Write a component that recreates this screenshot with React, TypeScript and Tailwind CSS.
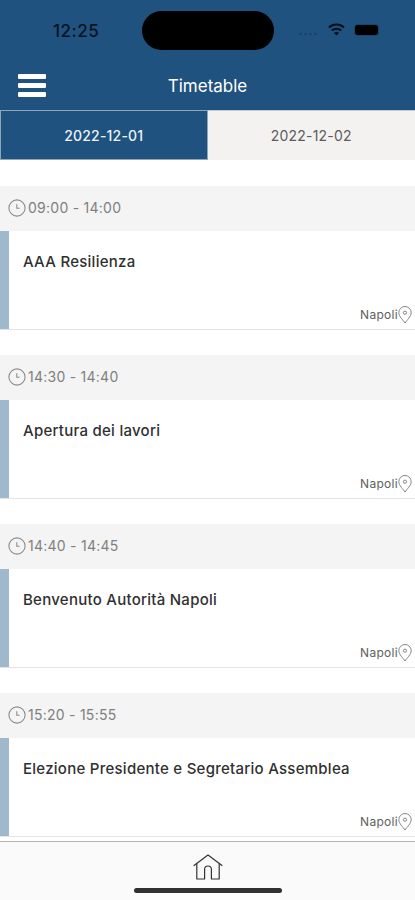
const sessions = [
  { time: "09:00 - 14:00", title: "AAA Resilienza", place: "Napoli" },
  { time: "14:30 - 14:40", title: "Apertura dei lavori", place: "Napoli" },
  { time: "14:40 - 14:45", title: "Benvenuto Autorità Napoli", place: "Napoli" },
  { time: "15:20 - 15:55", title: "Elezione Presidente e Segretario Assemblea", place: "Napoli" },
];

function ClockIcon() {
  return (
    <svg width="18" height="18" viewBox="0 0 18 18" fill="none" stroke="#8c8c8c" strokeWidth="1.1">
      <circle cx="9" cy="9" r="8.1" />
      <path d="M8.8 5.2V9.3H11.6" />
    </svg>
  );
}

function PinIcon() {
  return (
    <svg width="14" height="18" viewBox="0 0 14 18" fill="none" stroke="#858585" strokeWidth="1">
      <path d="M7 17C5.2 14.2 0.8 10.5 0.8 6.7a6.2 6.2 0 0 1 12.4 0C13.2 10.5 8.8 14.2 7 17Z" />
      <circle cx="7" cy="6.7" r="1.6" />
    </svg>
  );
}

function WifiIcon() {
  return (
    <svg width="17" height="13" viewBox="0 0 17 13" fill="none" stroke="#05111c" strokeWidth="2.1">
      <path d="M1 4.5a10.8 10.8 0 0 1 15 0" />
      <path d="M3.8 7.6a6.8 6.8 0 0 1 9.4 0" />
      <path d="M8.5 12.5 6 10a3.6 3.6 0 0 1 5 0Z" fill="#05111c" stroke="none" />
    </svg>
  );
}

function HomeIcon() {
  return (
    <svg width="30" height="27" viewBox="0 0 30 27" fill="none" stroke="#333" strokeWidth="1.2" strokeLinejoin="round" strokeLinecap="round">
      <path d="M1 11.5 15 1 29 11.5" />
      <path d="M3.8 9.6V25H11.6V15.4a3.4 3.4 0 0 1 6.8 0V25H26.2V9.6" />
    </svg>
  );
}

export default function App() {
  return (
    <div className="flex h-[900px] w-full flex-col overflow-hidden bg-white font-['Inter',sans-serif]">
      <header className="flex h-[110px] shrink-0 flex-col bg-[#1f527e]">
        <div className="grid h-[61px] grid-cols-[142px_132px_1fr] items-center">
          <div className="pl-[53px] text-[17px] font-medium leading-5 tracking-[0.5px] text-[#06121d]">12:25</div>
          <div className="h-[39px] rounded-full bg-black" />
          <div className="flex items-center pl-[25px]">
            <div className="mt-[7px] flex gap-[2px]">
              {[0, 1, 2, 3].map((i) => (
                <span key={i} className="h-[2px] w-[3px] rounded-full bg-[#1b456b]" />
              ))}
            </div>
            <div className="mb-[2px] ml-[11px]"><WifiIcon /></div>
            <div className="mb-px ml-[10px] h-[10px] w-[23px] rounded-[3px] bg-black shadow-[0_0_0_1px_#194568]" />
          </div>
        </div>
        <div className="grid flex-1 grid-cols-[1fr_auto_1fr] items-center">
          <button aria-label="Menu" className="ml-[18px] flex w-7 flex-col gap-[4px]">
            <span className="h-[5px] rounded-[1px] bg-white" />
            <span className="h-[5px] rounded-[1px] bg-white" />
            <span className="h-[5px] rounded-[1px] bg-white" />
          </button>
          <h1 className="text-[17px] leading-6 text-white">Timetable</h1>
        </div>
      </header>

      <nav className="grid h-[50px] shrink-0 grid-cols-2 text-[14px]">
        <button className="border border-[#8ea5ba] bg-[#1f527e] font-medium tracking-[0.2px] text-[#edf2f7]">2022-12-01</button>
        <button className="border-t border-[#c5cbd2] bg-[#f3f2f1] tracking-[0.2px] text-[#5c5c5c]">2022-12-02</button>
      </nav>

      <main className="min-h-0 flex-1 overflow-hidden">
        {sessions.map((s) => (
          <section key={s.time} className="h-[169px] pt-[26px]">
            <div className="flex h-[45px] items-center bg-[#f4f4f4] pb-[2px] pl-2 text-[14px] text-[#808080]">
              <ClockIcon />
              <span className="ml-[2px] tracking-[0.25px]">{s.time}</span>
            </div>
            <div className="flex h-[99px] border-b border-[#e4e4e4]">
              <div className="w-[9px] shrink-0 bg-[#a0b8cb]" />
              <div className="flex min-w-0 flex-1 flex-col justify-between pl-[14px] pr-[3px] pt-[20px]">
                <h2 className="whitespace-nowrap text-[15px] font-medium leading-[22px] tracking-[0.26px] text-[#303030]">{s.title}</h2>
                <div className="mb-[5px] flex items-center justify-end text-[12px] leading-[18px] text-[#606060]">
                  <span className="pt-px tracking-[0.3px]">{s.place}</span>
                  <PinIcon />
                </div>
              </div>
            </div>
          </section>
        ))}
      </main>

      <footer className="flex h-[59px] shrink-0 flex-col items-center border-t border-[#b5b5b5] bg-[#fafafa] pt-[12px]">
        <HomeIcon />
        <div className="mt-[7px] h-[5px] w-[148px] rounded-full bg-[#303030]" />
      </footer>
    </div>
  );
}
